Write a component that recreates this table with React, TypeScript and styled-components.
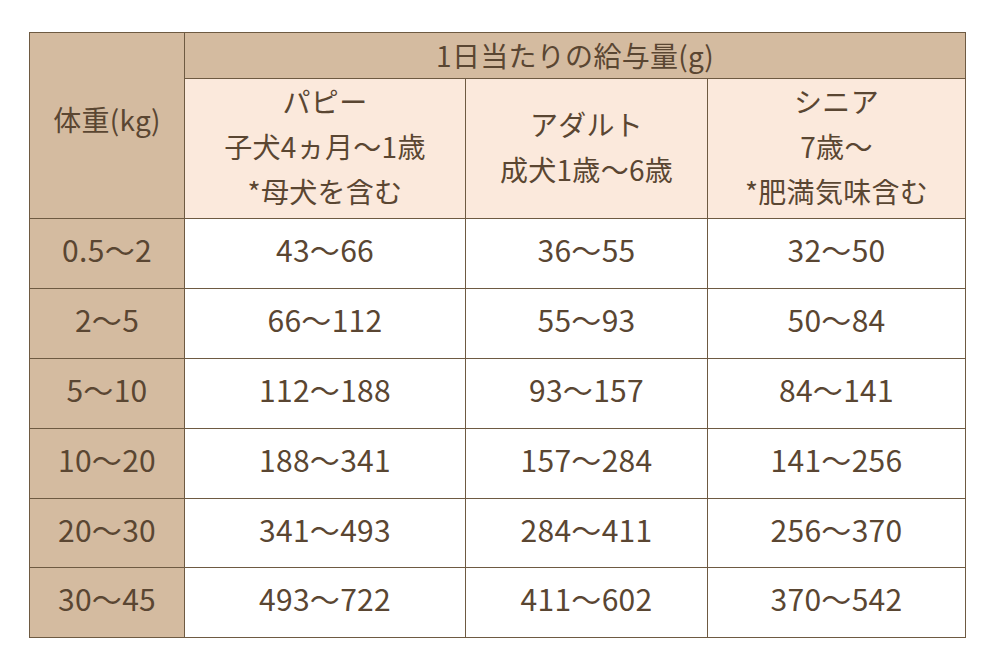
import * as React from 'react';
import styled, { createGlobalStyle } from 'styled-components';

const GlobalStyle = createGlobalStyle`
  html, body {
    margin: 0;
    padding: 0;
    background: #ffffff;
  }
  body {
    font-family: "Noto Sans CJK JP", "Noto Sans", sans-serif;
    color: #5a4632;
  }
`;

const Page = styled.div`
  width: 1000px;
  height: 670px;
  padding: 32px 0 0 29px;
  box-sizing: border-box;
`;

const Table = styled.table`
  border-collapse: collapse;
  width: 936px;
  table-layout: fixed;
`;

const Cell = styled.td<{ $tone?: 'dark' | 'light' | 'plain'; $height?: number }>`
  border: 1.5px solid #6e5a42;
  text-align: center;
  vertical-align: middle;
  padding: 0 0 8px;
  font-weight: 400;
  font-size: 30px;
  line-height: 45px;
  letter-spacing: 0.3px;
  height: ${(p) => (p.$height ? `${p.$height}px` : 'auto')};
  background: ${(p) =>
    p.$tone === 'dark' ? '#d4bba0' : p.$tone === 'light' ? '#fbe9dc' : '#ffffff'};
`;

const Title = styled(Cell)`
  font-size: 28px;
  line-height: 30px;
  padding: 0 0 2px;
`;

const SubHead = styled(Cell)`
  font-size: 28px;
  line-height: 45px;
  padding: 0 0 4px;
`;

const WeightHead = styled(SubHead)`
  padding: 0 0 12px;
`;

const rows: [string, string, string, string][] = [
  ['0.5～2', '43～66', '36～55', '32～50'],
  ['2～5', '66～112', '55～93', '50～84'],
  ['5～10', '112～188', '93～157', '84～141'],
  ['10～20', '188～341', '157～284', '141～256'],
  ['20～30', '341～493', '284～411', '256～370'],
  ['30～45', '493～722', '411～602', '370～542'],
];

const App: React.FC = () => {
  return (
    <Page>
      <GlobalStyle />
      <Table>
        <colgroup>
          <col style={{ width: 155 }} />
          <col style={{ width: 281 }} />
          <col style={{ width: 242 }} />
          <col style={{ width: 258 }} />
        </colgroup>
        <tbody>
          <tr>
            <WeightHead as="th" rowSpan={2} $tone="dark">
              体重(kg)
            </WeightHead>
            <Title as="th" colSpan={3} $tone="dark" $height={43}>
              1日当たりの給与量(g)
            </Title>
          </tr>
          <tr>
            <SubHead as="th" $tone="light" $height={133}>
              パピー
              <br />
              子犬4ヵ月～1歳
              <br />
              *母犬を含む
            </SubHead>
            <SubHead as="th" $tone="light">
              アダルト
              <br />
              成犬1歳～6歳
            </SubHead>
            <SubHead as="th" $tone="light">
              シニア
              <br />
              7歳～
              <br />
              *肥満気味含む
            </SubHead>
          </tr>
          {rows.map((r) => (
            <tr key={r[0]}>
              <Cell $tone="dark" $height={60.9}>
                {r[0]}
              </Cell>
              <Cell>{r[1]}</Cell>
              <Cell>{r[2]}</Cell>
              <Cell>{r[3]}</Cell>
            </tr>
          ))}
        </tbody>
      </Table>
    </Page>
  );
};

export default App;
